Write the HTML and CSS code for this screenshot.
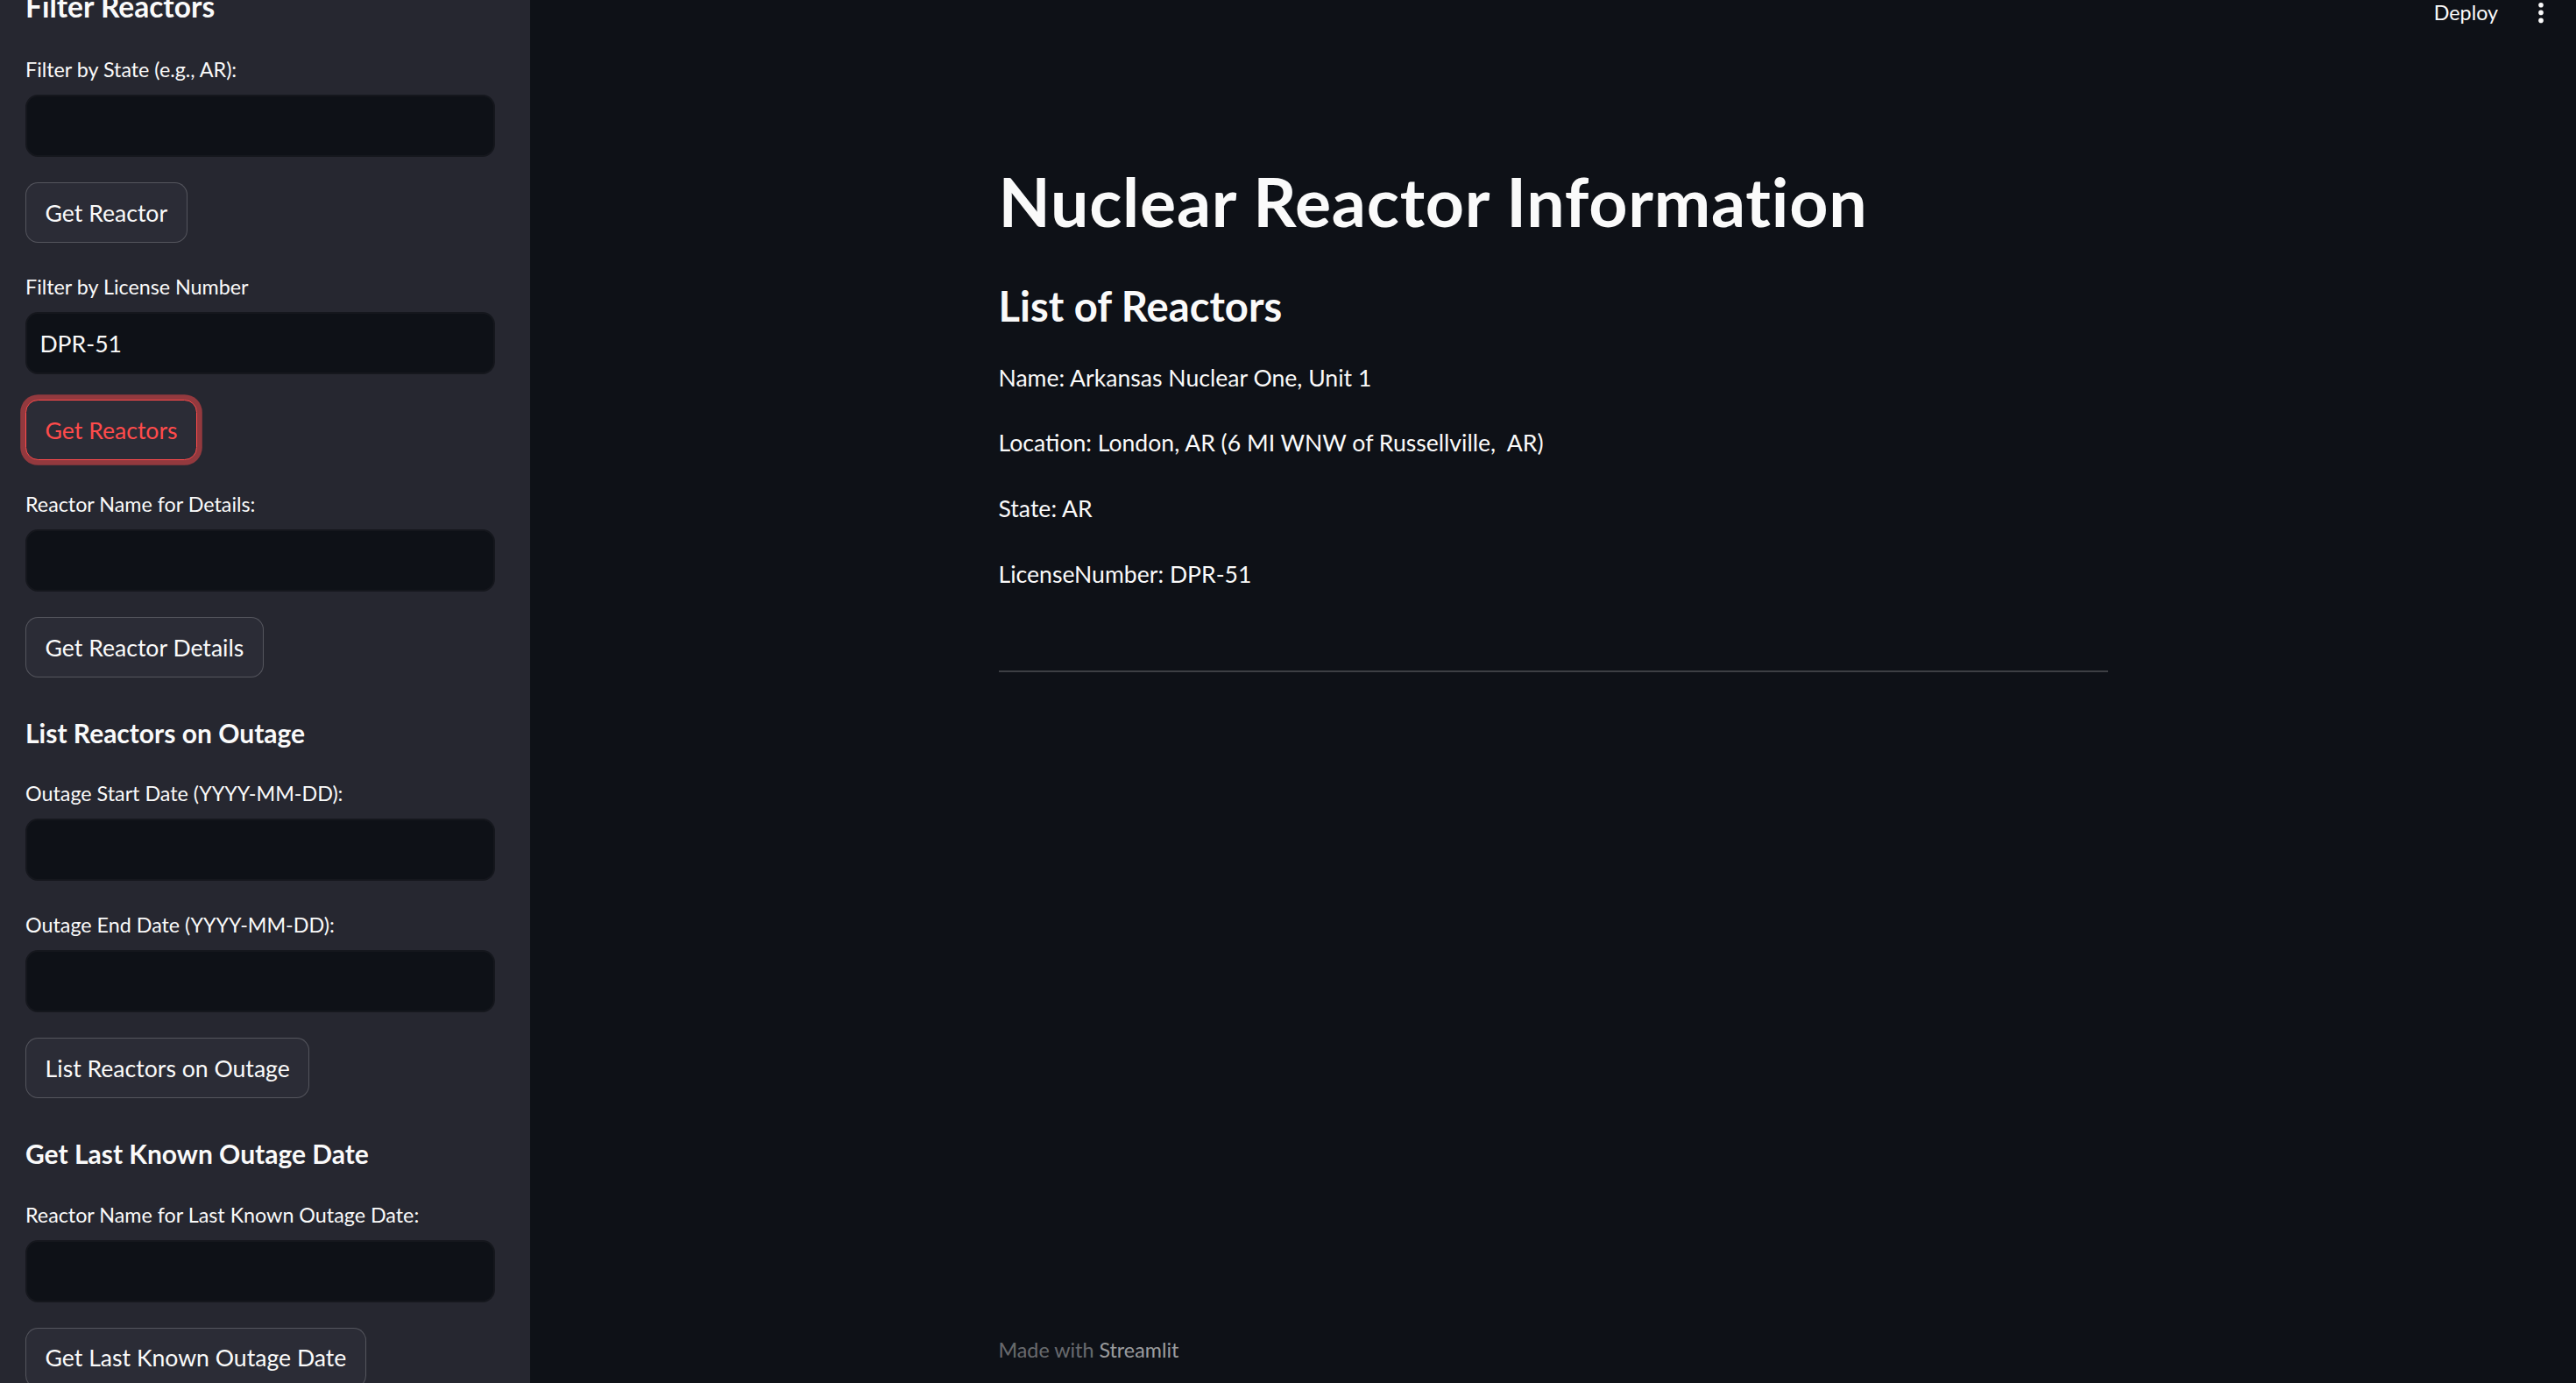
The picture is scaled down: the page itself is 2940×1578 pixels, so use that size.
FILE: index.html
```
<!DOCTYPE html>
<html lang="en">
<head>
<meta charset="utf-8">
<title>Nuclear Reactor Information</title>
<link rel="stylesheet" href="styles.css">
</head>
<body>
<div class="app">
  <aside class="sidebar">
    <div class="sidebar-content">
      <h2 class="side-h2">Filter Reactors</h2>

      <div class="field">
        <label class="field-label">Filter by State (e.g., AR):</label>
        <div class="text-input"></div>
      </div>
      <button class="btn">Get Reactor</button>

      <div class="field">
        <label class="field-label">Filter by License Number</label>
        <div class="text-input">DPR-51</div>
      </div>
      <button class="btn btn-focus">Get Reactors</button>

      <div class="field">
        <label class="field-label">Reactor Name for Details:</label>
        <div class="text-input"></div>
      </div>
      <button class="btn">Get Reactor Details</button>

      <h3 class="side-h3">List Reactors on Outage</h3>

      <div class="field">
        <label class="field-label">Outage Start Date (YYYY-MM-DD):</label>
        <div class="text-input"></div>
      </div>
      <div class="field">
        <label class="field-label">Outage End Date (YYYY-MM-DD):</label>
        <div class="text-input"></div>
      </div>
      <button class="btn">List Reactors on Outage</button>

      <h3 class="side-h3">Get Last Known Outage Date</h3>

      <div class="field">
        <label class="field-label">Reactor Name for Last Known Outage Date:</label>
        <div class="text-input"></div>
      </div>
      <button class="btn">Get Last Known Outage Date</button>
    </div>
  </aside>

  <main class="main">
    <header class="top-header">
      <span class="deploy">Deploy</span>
      <svg class="menu-dots" width="8" height="30" viewBox="0 0 8 30" aria-hidden="true">
        <circle cx="4" cy="5.7" r="2.8" fill="#fafafa"/>
        <circle cx="4" cy="14.4" r="2.8" fill="#fafafa"/>
        <circle cx="4" cy="23.4" r="2.8" fill="#fafafa"/>
      </svg>
    </header>

    <div class="block">
      <h1 class="title">Nuclear Reactor Information</h1>
      <h2 class="subheader">List of Reactors</h2>
      <p class="para">Name: Arkansas Nuclear One, Unit 1</p>
      <p class="para">Location: London, AR (6 MI WNW of Russellville,&nbsp; AR)</p>
      <p class="para">State: AR</p>
      <p class="para">LicenseNumber: DPR-51</p>
      <hr class="divider">
    </div>

    <footer class="footer">
      <span class="footer-faded">Made with</span> <span class="footer-link">Streamlit</span>
    </footer>
  </main>
</div>
</body>
</html>
```
FILE: styles.css
```
html, body {
  margin: 0;
  padding: 0;
  height: 100%;
  overflow: hidden;
  background: #0e1117;
}

body {
  font-family: "Lato", "Liberation Sans", sans-serif;
  color: #fafafa;
}

.app {
  display: flex;
  height: 1578px;
}

/* ---------- Sidebar ---------- */
.sidebar {
  flex: 0 0 605px;
  width: 605px;
  background: #262730;
  overflow: hidden;
}

.sidebar-content {
  display: flex;
  flex-direction: column;
  align-items: flex-start;
  gap: 29px;
  padding: 0 40px 0 29px;
}

.side-h2 {
  margin: -14px 0 0 0;
  font-size: 33.5px;
  line-height: 43.2px;
  font-weight: 700;
  color: #fafafa;
}

.side-h3 {
  margin: 0;
  padding-top: 16px;
  font-size: 30px;
  line-height: 37.3px;
  font-weight: 700;
  color: #fafafa;
}

.field {
  display: flex;
  flex-direction: column;
  align-self: stretch;
}

.field-label {
  display: block;
  font-size: 23.3px;
  line-height: 43.2px;
  height: 43.2px;
  margin-bottom: 6.8px;
  color: #fafafa;
}

.text-input {
  box-sizing: border-box;
  height: 71px;
  background: #0e1117;
  border: 2px solid #15171d;
  border-radius: 14.4px;
  padding: 0 14.4px;
  display: flex;
  align-items: center;
  font-size: 26.6px;
  color: #fafafa;
}

.btn {
  box-sizing: border-box;
  height: 69px;
  padding: 0 21.6px;
  background: #2b2c36;
  border: 1.8px solid rgba(250, 250, 250, 0.2);
  border-radius: 14.4px;
  font-family: "Lato", "Liberation Sans", sans-serif;
  font-size: 26.6px;
  color: #fafafa;
  display: inline-flex;
  align-items: center;
  cursor: pointer;
}

.btn-focus {
  border-color: #ff4b4b;
  color: #ff4b4b;
  box-shadow: 0 0 0 5.8px rgba(255, 75, 75, 0.5);
}

/* ---------- Main ---------- */
.main {
  flex: 1;
  position: relative;
  display: flex;
  flex-direction: column;
  min-width: 0;
}

.top-header {
  position: absolute;
  top: 0;
  right: 36px;
  display: flex;
  align-items: flex-start;
  gap: 45px;
}

.deploy {
  font-size: 23.3px;
  line-height: 28px;
  color: #fafafa;
}

.menu-dots {
  display: block;
}

.block {
  width: 1266px;
  margin: 0 auto;
  padding-top: 183px;
}

.title {
  margin: 0;
  font-size: 77px;
  line-height: 92px;
  font-weight: 700;
  letter-spacing: 0.8px;
  color: #fafafa;
}

.subheader {
  margin: 45.7px 0 0 0;
  font-size: 47.2px;
  line-height: 56.6px;
  font-weight: 700;
  color: #fafafa;
}

.para {
  margin: 0 0 28.8px 0;
  font-size: 26.6px;
  line-height: 46.08px;
  color: #fafafa;
}

.subheader + .para {
  margin-top: 30.3px;
}

.divider {
  margin: 86.6px 0 0 0;
  height: 0;
  border: 0;
  border-top: 2px solid rgba(250, 250, 250, 0.2);
}

.footer {
  margin-top: auto;
  width: 1266px;
  margin-left: auto;
  margin-right: auto;
  padding-bottom: 18px;
  font-size: 23.3px;
  line-height: 40.3px;
}

.footer-faded {
  color: rgba(250, 250, 250, 0.4);
}

.footer-link {
  color: rgba(250, 250, 250, 0.6);
}
```
